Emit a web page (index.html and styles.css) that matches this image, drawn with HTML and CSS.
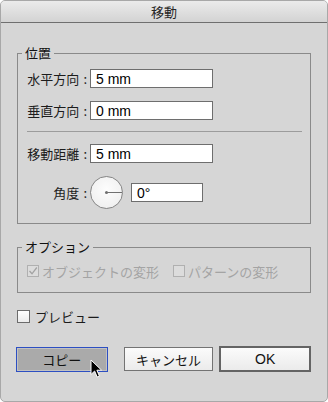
FILE: index.html
```html
<!DOCTYPE html>
<html lang="ja">
<head>
    <meta charset="UTF-8">
    <meta name="viewport" content="width=device-width, initial-scale=1.0">
    <title>移動</title>
    <link rel="stylesheet" href="styles.css">
</head>
<body>
    <div class="window">
        <div class="titlebar">移動</div>

        <div class="content">
            <fieldset class="group position-group">
                <legend>位置</legend>
                <div class="row">
                    <label class="label">水平方向<span class="colon">:</span></label>
                    <input class="field" type="text" value="5 mm">
                </div>
                <div class="row">
                    <label class="label">垂直方向<span class="colon">:</span></label>
                    <input class="field" type="text" value="0 mm">
                </div>
                <div class="separator"></div>
                <div class="row">
                    <label class="label">移動距離<span class="colon">:</span></label>
                    <input class="field" type="text" value="5 mm">
                </div>
                <div class="row angle-row">
                    <label class="label">角度<span class="colon">:</span></label>
                    <div class="dial"><span class="dial-hand"></span></div>
                    <input class="field angle-field" type="text" value="0°">
                </div>
            </fieldset>

            <fieldset class="group options-group">
                <legend>オプション</legend>
                <div class="options">
                    <span class="check-item disabled">
                        <span class="box checked">
                            <svg width="10" height="10" viewBox="0 0 10 10"><path d="M1.5 5 L4 7.8 L8.8 1.5" fill="none" stroke="#a3a3a3" stroke-width="1.3"/></svg>
                        </span>
                        オブジェクトの変形
                    </span>
                    <span class="check-item disabled">
                        <span class="box"></span>
                        パターンの変形
                    </span>
                </div>
            </fieldset>

            <div class="preview">
                <span class="box preview-box"></span>
                プレビュー
            </div>

            <div class="buttons">
                <button class="btn btn-copy">コピー</button>
                <button class="btn btn-cancel">キャンセル</button>
                <button class="btn btn-ok">OK</button>
            </div>
        </div>

        <!-- mouse pointer over the copy button -->
        <svg class="cursor" width="13" height="20" viewBox="0 0 13 20">
            <path d="M1 1 L1 15.5 L4.6 12 L7.2 18 L9.4 17 L6.9 11.2 L11.6 11.2 Z" fill="#000" stroke="#fff" stroke-width="1"/>
        </svg>
    </div>
</body>
</html>
```

FILE: styles.css
```css
body {
    margin: 0;
    background: #fff;
    font-family: "Noto Sans CJK JP", "Liberation Sans", sans-serif;
    font-size: 13px;
    color: #1c1c1c;
}
.window {
    position: relative;
    width: 328px;
    height: 402px;
    box-sizing: border-box;
    border: 1px solid #a8a8a8;
    border-radius: 5px;
    background: #d6d6d6;
    overflow: hidden;
}
.titlebar {
    height: 21px;
    line-height: 21px;
    text-align: center;
    border-bottom: 1px solid #6f6f6f;
    background: linear-gradient(#ebebeb, #d3d3d3);
    color: #262626;
}
.content {
    padding: 0 16px;
}
.group {
    margin: 0;
    border: 1px solid #8a8a8a;
    padding: 0 8px 0 9px;
}
.group legend {
    padding: 0 3px;
    margin-left: -5px;
    line-height: 16px;
    color: #111;
}
.position-group {
    margin-top: 22px;
    padding-top: 8px;
    padding-bottom: 14px;
}
.row {
    display: flex;
    align-items: center;
    height: 19px;
    margin-bottom: 13px;
}
.angle-row {
    height: 33px;
    margin-bottom: 0;
}
.label {
    width: 60px;
    text-align: right;
    margin-right: 3px;
    white-space: nowrap;
}
.colon {
    margin-left: 4px;
}
.field {
    width: 123px;
    height: 19px;
    box-sizing: border-box;
    border: 1px solid #6e6e6e;
    background: #fff;
    padding: 0 0 0 5px;
    margin: 0;
    font-family: "Liberation Sans", Arial, sans-serif;
    font-size: 14px;
    color: #000;
    outline: none;
}
.angle-field {
    width: 72px;
    margin-left: 8px;
}
.separator {
    height: 1px;
    background: #9c9c9c;
    margin: -2px 0 12px;
}
.dial {
    position: relative;
    width: 33px;
    height: 33px;
    box-sizing: border-box;
    border: 1px solid #858585;
    border-radius: 50%;
    background: radial-gradient(circle at 50% 40%, #fdfdfd, #ececec);
}
.dial-hand {
    position: absolute;
    left: 15px;
    top: 15px;
    width: 16px;
    height: 1px;
    background: #707070;
}
.dial-hand::before {
    content: "";
    position: absolute;
    left: -1px;
    top: -1px;
    width: 3px;
    height: 3px;
    border-radius: 50%;
    background: #707070;
}
.options-group {
    margin-top: 15px;
    padding-top: 8px;
    padding-bottom: 13px;
}
.options {
    display: flex;
    height: 16px;
    align-items: center;
    gap: 14px;
}
.check-item {
    display: flex;
    align-items: center;
    gap: 3px;
    white-space: nowrap;
}
.disabled {
    color: #a4a4a4;
}
.box {
    display: inline-flex;
    align-items: center;
    justify-content: center;
    width: 12px;
    height: 12px;
    box-sizing: border-box;
    border: 1px solid #b0b0b0;
    background: #dcdcdc;
}
.preview {
    display: flex;
    align-items: center;
    gap: 5px;
    height: 16px;
    margin-top: 15px;
}
.preview-box {
    width: 13px;
    height: 13px;
    border-color: #6c6c6c;
    background: linear-gradient(#fff, #ececec);
}
.buttons {
    display: flex;
    align-items: center;
    margin: 22px 0 0 -1px;
}
.btn {
    height: 25px;
    box-sizing: border-box;
    padding: 0;
    margin: 0;
    font-family: "Noto Sans CJK JP", "Liberation Sans", sans-serif;
    font-size: 13px;
    color: #111;
    border: 1px solid #737373;
    background: linear-gradient(#fbfbfb, #ebebeb);
}
.btn-copy {
    width: 92px;
    border: 1px solid #2d4fc2;
    box-shadow: inset 0 0 0 1px #c2c2c2;
    background: #aaaaaa;
    margin-right: 16px;
}
.btn-cancel {
    width: 90px;
    height: 24px;
    margin-right: 6px;
}
.btn-ok {
    width: 92px;
    height: 26px;
    border: 2px solid #646464;
    font-family: "Liberation Sans", Arial, sans-serif;
    font-size: 14px;
}
.cursor {
    position: absolute;
    left: 89px;
    top: 358px;
}
```
